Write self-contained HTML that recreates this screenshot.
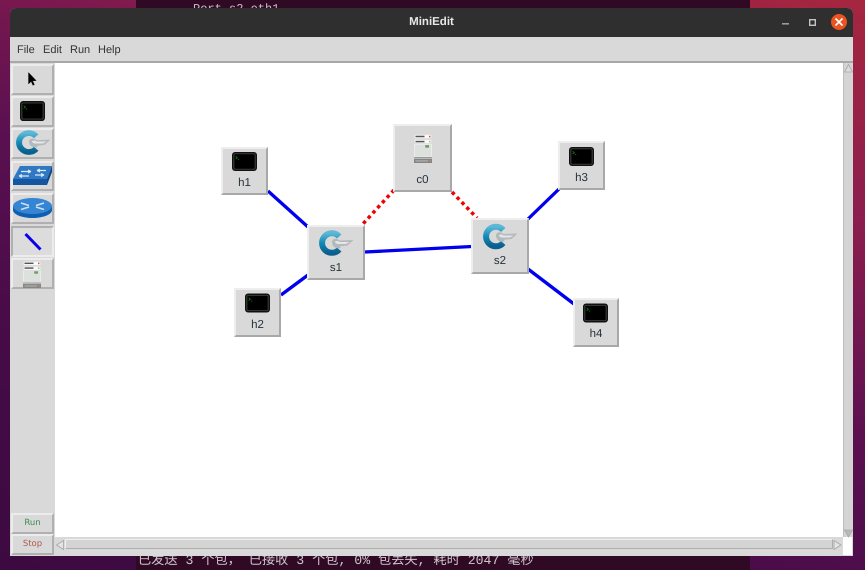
<!DOCTYPE html>
<html><head><meta charset="utf-8">
<style>
html,body{margin:0;padding:0}
body{width:865px;height:570px;overflow:hidden;position:relative;background:#4a0d48;font-family:"Liberation Sans","DejaVu Sans",sans-serif;text-rendering:geometricPrecision}
#w{position:absolute;left:0;top:0;width:865px;height:570px;overflow:hidden;filter:blur(.35px)}
.a{position:absolute}
.bg{left:0;top:0;width:865px;height:570px;background:linear-gradient(200deg,#a5263f 0%,#8c1d4e 25%,#5b1050 50%,#450b47 75%,#3c0a40 100%)}
.term{left:136px;top:0;width:614px;height:570px;background:#300a24}
.win{left:10px;top:8px;width:843px;height:548px;background:#d9d9d9;border-radius:6px 6px 0 0;overflow:hidden}
.tb{left:0;top:0;width:843px;height:29px;background:#2f2f2f;color:#e8e8e8;font:bold 11.5px "Liberation Sans",sans-serif;text-align:center;line-height:29px}
.menu{left:0;top:29px;width:843px;height:26px;background:#d9d9d9;border-bottom:2px solid #a8a8a8;box-sizing:border-box}
.m{font-size:11px;color:#333;line-height:14px;position:absolute}
.btn{position:absolute;left:11px;width:43px;box-sizing:border-box;background:#d9d9d9;border:2px solid;border-color:#ececec #b0b0b0 #b0b0b0 #ececec}
.node{position:absolute;box-sizing:border-box;background:#d9d9d9;border:2px solid;border-color:#eeeeee #a8a8a8 #a8a8a8 #eeeeee;text-align:center;font-size:11.5px;color:#26323a}
.node span{position:absolute;left:0;right:0;line-height:14px}
svg{position:absolute;overflow:visible}
</style></head>
<body>
<div id="w">
<div class="a bg"></div>
<div class="a term"></div>
<div class="a" style="left:193px;top:2px;font:12px/14px 'Liberation Mono',monospace;color:#c9bcc5">Port s2-eth1</div>
<div class="a" style="left:138px;top:553px;font:13.2px/16px 'Liberation Mono','Noto Sans CJK SC',monospace;color:#cfc6cc;white-space:pre">已发送 3 个包， 已接收 3 个包, 0% 包丢失, 耗时 2047 毫秒</div>

<div class="a win">
  <div class="a tb">MiniEdit</div>
  <div class="a menu"></div>
</div>
<div class="a" style="left:831px;top:14px;width:16px;height:16px;border-radius:50%;background:#e95420"></div>
<svg style="left:0;top:0" width="865" height="570">
  <path d="M835.500 18.500l7 7M842.500 18.500l-7 7" stroke="#fff" stroke-width="1.600"/>
  <rect x="782" y="23" width="7" height="1.600" fill="#9a9a9a"/>
  <rect x="809.700" y="19.700" width="5.600" height="5.600" fill="none" stroke="#c4c4c4" stroke-width="1.400"/>
</svg>
<div class="m" style="left:17px;top:43px">File</div>
<div class="m" style="left:43px;top:43px">Edit</div>
<div class="m" style="left:70px;top:43px">Run</div>
<div class="m" style="left:98px;top:43px">Help</div>

<!-- canvas -->
<div class="a" style="left:55px;top:63px;width:788px;height:474px;background:#fff"></div>
<!-- vertical scrollbar -->
<div class="a" style="left:843px;top:63px;width:10px;height:474px;background:#d4d4d4;border-left:1px solid #bdbdbd;box-sizing:border-box"></div>
<div class="a" style="left:843px;top:537px;width:9px;height:18px;background:#fff"></div>
<!-- horizontal scrollbar -->
<div class="a" style="left:55px;top:537px;width:788px;height:18px;background:#d9d9d9"></div>
<div class="a" style="left:65px;top:539px;width:768px;height:10px;background:#d4d4d4;border:1px solid #bcbcbc;border-color:#efefef #adadad #adadad #efefef;box-sizing:border-box"></div>
<svg style="left:0;top:0" width="865" height="570">
  <path d="M844.500 72l4-7.500 4 7.500z" fill="#dcdcdc" stroke="#a8a8a8" stroke-width=".8"/>
  <path d="M844.500 530l4 7 4-7z" fill="#b9b9b9" stroke="#a8a8a8" stroke-width=".8"/>
  <path d="M63.500 540.500v9l-7-4.500z" fill="#e4e4e4" stroke="#a4a4a4" stroke-width=".8"/>
  <path d="M834 540.500v9l7-4.500z" fill="#e4e4e4" stroke="#a4a4a4" stroke-width=".8"/>
</svg>

<svg width="0" height="0" style="left:0;top:0">
  <defs>
    <linearGradient id="rg" x1="0" y1="0" x2="0" y2="1">
      <stop offset="0" stop-color="#5cb8d6"/><stop offset=".5" stop-color="#1588b5"/><stop offset="1" stop-color="#0b5f8e"/>
    </linearGradient>
    <symbol id="term" viewBox="0 0 26 20" overflow="visible" preserveAspectRatio="none">
      <rect x=".8" y=".8" width="24.400" height="18.400" rx="2.400" fill="#000" stroke="#111" stroke-width="1.600"/>
      <rect x="2" y="2" width="22" height="16" rx="1" fill="#000" stroke="#6a6a6a" stroke-width=".6"/>
      <path d="M3.800 4.500l1.800 1.500-1.800 1.500M6 8h1.500" stroke="#0f9a0f" stroke-width=".7" fill="none"/>
    </symbol>
    <symbol id="sw" viewBox="0 0 36 27" overflow="visible" preserveAspectRatio="none">
      <path d="M21.200 6.500A9.800 9.800 0 1 0 21.200 19.500" fill="none" stroke="url(#rg)" stroke-width="6"/>
      <path d="M14 12c0-2.500 2.500-3.800 5-3 1.200.4 1.800 1 2.300 1.500l14.200-.5-6 5.500-7.500.8.500 1.700-3.500.2C16 17.500 14 15 14 12z" fill="#b4b9bc"/>
      <path d="M17 11.500c2-1 3.500-.5 4.500.5h10l-3.500 2h-8c-1.500-.3-3-1-3-2.500z" fill="#e4e6e7"/>
    </symbol>
    <symbol id="ctl" viewBox="0 0 24 34" overflow="visible" preserveAspectRatio="none">
      <rect x="0" y="0" width="24" height="34" fill="#eeeeee"/>
      <rect x=".5" y=".5" width="23" height="5" fill="#fafafa" stroke="#c0c0c0" stroke-width=".5"/>
      <rect x="2" y="2" width="12" height="1.800" fill="#555"/><rect x="20" y="2" width="2" height="2" fill="#d55"/>
      <rect x=".5" y="6.500" width="23" height="5" fill="#fafafa" stroke="#c0c0c0" stroke-width=".5"/>
      <rect x="2" y="8" width="12" height="1.800" fill="#555"/><rect x="20" y="8" width="2" height="2" fill="#8c8"/>
      <rect x="1" y="12.500" width="22" height="14" fill="#dde1dd"/>
      <rect x="15" y="13" width="5" height="3" fill="#6f9a64"/>
      <rect x="0" y="27" width="24" height="1.500" fill="#999"/>
      <rect x="0" y="29" width="24" height="5" fill="#858585"/>
      <rect x="2" y="30.500" width="20" height="2" fill="#a5a5a5"/><rect x="19" y="31" width="2" height="1.500" fill="#b2622e"/>
    </symbol>
  </defs>
</svg>

<!-- toolbar -->
<div class="a" style="left:10px;top:63px;width:45px;height:493px;background:#d9d9d9"></div>
<div class="btn" style="top:64px;height:31px"></div>
<div class="btn" style="top:96px;height:31px"></div>
<div class="btn" style="top:128px;height:31px"></div>
<div class="btn" style="top:161px;height:30px"></div>
<div class="btn" style="top:193px;height:31px"></div>
<div class="btn" style="top:226px;height:31px;background:#dcdcdc;border-color:#b0b0b0 #ececec #ececec #b0b0b0"></div>
<div class="btn" style="top:258px;height:31px"></div>
<div class="btn" style="top:513px;height:21px;text-align:center;font:8.500px/17px 'DejaVu Sans',sans-serif;color:#3f8a4f">Run</div>
<div class="btn" style="top:534px;height:21px;text-align:center;font:8.500px/17px 'DejaVu Sans',sans-serif;color:#b3584f">Stop</div>

<svg style="left:0;top:0" width="865" height="570">
  <path d="M28.500 72.500v11.500l2.700-2.500 1.700 3.800 1.500-.7-1.700-3.700 3.500-.3z" fill="#000" stroke="#222" stroke-width=".5"/>
  <use href="#term" x="20" y="101" width="25" height="20"/>
  <use href="#sw" x="15" y="130" width="36" height="26"/>
  <!-- legacy switch -->
  <path d="M20 166h32l-5 13H13z" fill="#2f78c4"/>
  <path d="M13 179h34v6H13z" fill="#14569f"/>
  <path d="M47 179l5-13v6l-5 13z" fill="#0f4787"/>
  <path d="M37 170.500h9M37 170.500l3-1.500M37 170.500l3 1.500M21 171.500h10M31 171.500l-3-1.500M31 171.500l-3 1.500M19 176h10M19 176l3-1.500M19 176l3 1.500M35 175h9M44 175l-3-1.500M44 175l-3 1.500" stroke="#dbe8f6" stroke-width="1.200" fill="none"/>
  <!-- router -->
  <path d="M13 206v4c0 4.500 9 8 19.500 8S52 214.500 52 210v-4z" fill="#0f5fb0"/>
  <ellipse cx="32.500" cy="206" rx="19.500" ry="8" fill="#3585d4"/>
  <path d="M21 203l8 2.500M21 209.500l8-2.500M44 203l-8 2.500M44 209.500l-8-2.500" stroke="#cfe0f2" stroke-width="1.500"/>
  <!-- link tool -->
  <path d="M25.500 234l15 15.500" stroke="#0a00e6" stroke-width="3"/>
  <use href="#ctl" x="23" y="261" width="18" height="27"/>
</svg>

<!-- links -->
<svg style="left:0;top:0" width="865" height="570">
  <g stroke="#0000ee" stroke-width="3.300" fill="none">
    <path d="M268 191l40 36"/>
    <path d="M281 295l27-20"/>
    <path d="M365 252l107-5.500"/>
    <path d="M527 220l32-31"/>
    <path d="M528 269l46 35"/>
  </g>
  <g stroke="#f20000" stroke-width="3.500" fill="none" stroke-dasharray="3.500 3.500">
    <path d="M394 190l-33 36"/>
    <path d="M452 192l25 26"/>
  </g>
</svg>

<!-- nodes -->
<div class="node" style="left:221px;top:147px;width:47px;height:48px"><span style="top:27px">h1</span></div>
<div class="node" style="left:234px;top:288px;width:47px;height:49px"><span style="top:28px">h2</span></div>
<div class="node" style="left:558px;top:141px;width:47px;height:49px"><span style="top:28px">h3</span></div>
<div class="node" style="left:573px;top:298px;width:46px;height:49px"><span style="top:27px">h4</span></div>
<div class="node" style="left:307px;top:225px;width:58px;height:55px"><span style="top:34px">s1</span></div>
<div class="node" style="left:471px;top:218px;width:58px;height:56px"><span style="top:34px">s2</span></div>
<div class="node" style="left:393px;top:124px;width:59px;height:68px"><span style="top:47px">c0</span></div>
<svg style="left:0;top:0" width="865" height="570">
  <use href="#term" x="232" y="152" width="25" height="19"/>
  <use href="#term" x="245" y="293.500" width="25" height="19"/>
  <use href="#term" x="569" y="147" width="25" height="19"/>
  <use href="#term" x="583" y="303.500" width="25" height="19"/>
  <use href="#sw" x="318" y="230" width="36" height="27"/>
  <use href="#sw" x="482" y="223.500" width="36" height="27"/>
  <use href="#ctl" x="414" y="134" width="18" height="29"/>
</svg>
</div>
</body></html>
